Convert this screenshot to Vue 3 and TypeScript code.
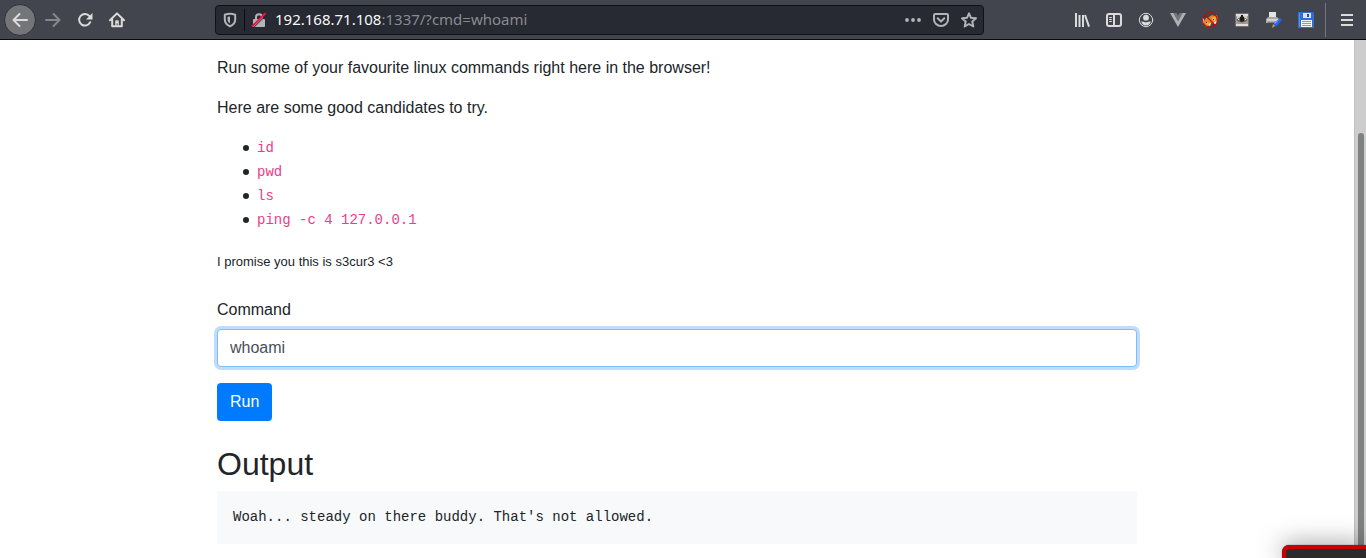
<script setup lang="ts">
import { ref } from 'vue'

const command = ref('whoami')
const candidates: string[] = ['id', 'pwd', 'ls', 'ping -c 4 127.0.0.1']
const output = "Woah... steady on there buddy. That's not allowed."
</script>

<template>
  <div class="window">
    <header class="toolbar">
      <nav class="nav" aria-label="Navigation">
        <button class="tool back" type="button" aria-label="Back">
          <svg width="16" height="16" viewBox="0 0 16 16"><path d="M15 8H2M7.500 2L1.500 8l6 6" /></svg>
        </button>
        <button class="tool dim" type="button" aria-label="Forward">
          <svg width="16" height="16" viewBox="0 0 16 16"><path d="M1 8h13M8.500 2l6 6-6 6" /></svg>
        </button>
        <button class="tool" type="button" aria-label="Reload">
          <svg width="16" height="16" viewBox="0 0 16 16"><path d="M13.200 10.200A5.800 5.800 0 1 1 12.500 4.200" /><path class="solid" d="M15.500 1v6.500H9z" /></svg>
        </button>
        <button class="tool" type="button" aria-label="Home">
          <svg width="16" height="16" viewBox="0 0 16 16"><path d="M1 8.200L8 1.400l7 6.800M3.200 7.500v6.800h9.600V7.500" /><path class="solid" d="M6.200 14V9.200q0-1 1-1h1.600q1 0 1 1V14H8.600v-2.500H7.600V14z" /></svg>
        </button>
      </nav>

      <div class="urlbar">
        <button class="mini" type="button" aria-label="Tracking protection">
          <svg width="16" height="16" viewBox="0 0 16 16"><path d="M8 1.800c1.800 0 3.500.4 5.200 1v4.700c0 3-2 5.500-5.200 6.900-3.200-1.400-5.200-3.900-5.200-6.900V2.800c1.700-.6 3.400-1 5.200-1z" /><path class="solid" d="M8 4.500c-1 0-1.700.1-2.500.4v2.600c0 1.700.9 3 2.500 4z" /></svg>
        </button>
        <span class="split"></span>
        <button class="mini" type="button" aria-label="Connection not secure">
          <svg width="16" height="16" viewBox="0 0 16 16"><path d="M5 7V5.200a3 3 0 0 1 6 0V7" /><path class="solid" d="M3 7h10q1 0 1 1v6q0 1-1 1H3q-1 0-1-1V8q0-1 1-1z" /><path class="gap" d="M3 15.200L15.500 3" /><path class="strike" d="M1.500 14L14 1.800" /></svg>
        </button>
        <a class="address" href="#"><b>192.168.71.108</b>:1337/?cmd=whoami</a>
        <div class="actions">
          <button class="mini" type="button" aria-label="Page actions">
            <svg width="16" height="16" viewBox="0 0 16 16"><g class="solid"><circle cx="2" cy="8" r="1.900" /><circle cx="8" cy="8" r="1.900" /><circle cx="14" cy="8" r="1.900" /></g></svg>
          </button>
          <button class="mini" type="button" aria-label="Save to Pocket">
            <svg width="16" height="16" viewBox="0 0 16 16"><path d="M2.300 2h11.400q1.300 0 1.300 1.300V7.500a7 6.500 0 0 1-14 0V3.300Q1 2 2.300 2z" /><path d="M4.700 6.300L8 9.400l3.300-3.100" /></svg>
          </button>
          <button class="mini" type="button" aria-label="Bookmark">
            <svg width="16" height="16" viewBox="0 0 16 16"><path d="M8 1.300l2 4.500 5 .5-3.700 3.300 1 4.900L8 12l-4.300 2.500 1-4.900L1 6.300l5-.5z" /></svg>
          </button>
        </div>
      </div>

      <div class="extensions">
        <button class="tool" type="button" aria-label="Library">
          <svg class="books" width="16" height="16" viewBox="0 0 16 16"><path d="M2 1v14M5.500 3v12M9 3v12M11 3l4 11.600" /></svg>
        </button>
        <button class="tool" type="button" aria-label="Sidebars">
          <svg width="16" height="16" viewBox="0 0 16 16"><rect x="1" y="2" width="14" height="12" rx="2" /><path d="M8 2v12" /><path class="fine" d="M3.500 5.500h2M3.500 7.500h2M3.500 9.500h2" /></svg>
        </button>
        <button class="tool" type="button" aria-label="Account">
          <svg width="16" height="16" viewBox="0 0 16 16"><circle class="fine" cx="8" cy="8" r="6.700" /><circle class="solid" cx="8" cy="5.700" r="2.900" /><path class="solid" d="M3.200 9.400q1.800 0 2.600.4 2.200 1 4.400 0 .8-.4 2.600-.4-.8 3.900-4.800 4-4-.1-4.800-4z" /></svg>
        </button>
        <button class="tool" type="button" aria-label="Vue devtools">
          <svg class="art" width="16" height="16" viewBox="0 0 16 16"><path fill="#b0b1b2" d="M0 1h3.500L8 9l4.500-8H16L8 15z" /><path fill="#74777b" d="M3.500 1h3L8 3.700 9.500 1h3L8 9z" /></svg>
        </button>
        <button class="tool" type="button" aria-label="Proxy switcher">
          <svg class="art" width="16" height="16" viewBox="0 0 16 16"><path fill="#e8842a" d="M2 9l2-3 3-1 3-2 2 1 3-1 1 4-1 4-3 1-3-1-1 3-4 1-2-3z" /><path fill="#f8b45a" d="M11 5l3 1-1 3-3-1zM4 10l3 1-2 2z" /><path fill="#f2e6d8" d="M0 6l2 1v4l-1 1zM12 10l3-1-1 3-2 1zM6 12l3-1-1 3z" /><path fill="#5b3217" d="M11 7h1v1h-1zM4 10h1v1H4z" /><circle cx="8" cy="8" r="7.400" fill="none" stroke="#c00d0d" stroke-width="1.100" /><path d="M3 3l10 10" stroke="#b01010" stroke-width="1.100" /></svg>
        </button>
        <button class="tool" type="button" aria-label="Privacy extension">
          <svg class="art" width="16" height="16" viewBox="0 0 16 16"><rect x="1.500" y="1.500" width="13" height="13" fill="#a59c94" /><path fill="#e0dcd7" d="M2 2h12v2H2zM2 12h12v2H2z" /><path fill="#d4cfc9" d="M3 4h3v3H3zM10 4h3v3h-3z" /><path fill="#6f6964" d="M2 8q6-6 12 0-6 5-12 0z" /><path fill="#181a1c" d="M7 3h2v2h1v4l-2 1-2-1V5h1z" /><path fill="#f0eeeb" d="M4 7h1v1H4zM11 7h1v1h-1z" /></svg>
        </button>
        <button class="tool" type="button" aria-label="Print and edit">
          <svg class="art" width="16" height="16" viewBox="0 0 16 16"><path fill="#e4e4e4" d="M3 0h7v6H3z" /><path fill="#a9a9a9" d="M2 5h9l2 2v4H0V7z" /><path fill="#d2d2d2" d="M1 7h11v2H1z" /><path fill="#858585" d="M2 10h9v1H2z" /><path fill="#2463e7" d="M14 6l2 2-5 6-4 1 1-4z" /><path fill="#79a6ff" d="M14 7l-5 5-1-1z" /><path fill="#d2a226" d="M7 12l2 2-3 2z" /></svg>
        </button>
        <button class="tool" type="button" aria-label="Save page">
          <svg class="art" width="16" height="16" viewBox="0 0 16 16"><path fill="#2f6fd0" d="M0 0h15l1 1v15H0z" /><path fill="#5a93e6" d="M1 1h1v14H1z" /><path fill="#dce6f2" d="M5 1h8v5H5z" /><path fill="#234f9b" d="M9 2h2v3H9z" /><path fill="#f6f6f6" d="M3 8h11v7H3z" /><path d="M4 9.500h9M4 11.500h9M4 13.500h9" stroke="#999" stroke-width="1" stroke-linecap="butt" /></svg>
        </button>
      </div>
      <span class="divider"></span>
      <button class="tool menu" type="button" aria-label="Menu">
        <svg width="16" height="16" viewBox="0 0 16 16"><path d="M2 3h12M2 8h12M2 13h12" /></svg>
      </button>
    </header>

    <div class="viewport">
      <main class="page">
        <div class="container">
          <p>Run some of your favourite linux commands right here in the browser!</p>
          <p>Here are some good candidates to try.</p>
          <ul>
            <li v-for="item in candidates" :key="item"><code>{{ item }}</code></li>
          </ul>
          <p class="note">I promise you this is s3cur3 &lt;3</p>
          <form @submit.prevent>
            <label for="command">Command</label>
            <input id="command" v-model="command" type="text" autocomplete="off" spellcheck="false" />
            <button class="run" type="submit">Run</button>
          </form>
          <h2>Output</h2>
          <pre>{{ output }}</pre>
        </div>
      </main>
      <div class="scrollbar" aria-hidden="true"><span class="thumb"></span></div>
    </div>
    <aside class="toast" aria-hidden="true"></aside>
  </div>
</template>

<style>
body {
  margin: 0;
  overflow: hidden;
}
</style>

<style scoped>
* {
  box-sizing: border-box;
}
.window {
  display: flex;
  flex-direction: column;
  height: 100vh;
  background: #fff;
  color: #212529;
  font: 16px/24px "Liberation Sans", Arial, sans-serif;
}
.toolbar {
  display: flex;
  flex: none;
  align-items: center;
  height: 40px;
  padding: 0 3px 0 4px;
  background: #42454d;
  border-bottom: 1px solid #0c0c0d;
}
.nav,
.extensions,
.actions {
  display: flex;
  align-items: center;
}
.tool,
.mini {
  display: grid;
  place-items: center;
  flex: none;
  width: 32px;
  height: 32px;
  padding: 0;
  border: 0;
  border-radius: 4px;
  background: none;
  color: #dbdbda;
}
.back {
  margin-right: 1px;
  border: 1px solid #303238;
  border-radius: 50%;
  background: #737578;
}
.dim {
  color: #85878b;
}
.mini {
  width: 28px;
  height: 28px;
  color: #b3b4b8;
}
svg {
  display: block;
  fill: none;
  stroke: currentColor;
  stroke-width: 2;
  stroke-linecap: round;
  stroke-linejoin: round;
}
.solid {
  fill: currentColor;
  stroke: none;
}
.fine {
  stroke-width: 1;
}
.art {
  stroke: none;
}
.books,
.menu svg {
  stroke-linecap: butt;
}
.gap {
  stroke: #272933;
  stroke-width: 1;
}
.strike {
  stroke: #f5103f;
}
.urlbar {
  display: flex;
  flex: 1;
  align-items: center;
  min-width: 0;
  height: 30px;
  margin: 0 82px;
  border: 1px solid #101116;
  border-radius: 4px;
  background: #272933;
}
.split {
  width: 1px;
  height: 22px;
  background: #0c0d10;
}
.address {
  flex: 1;
  margin-left: 2px;
  padding-bottom: 2px;
  overflow: hidden;
  color: #8a8b90;
  font: 15px/24px "Noto Sans", sans-serif;
  text-decoration: none;
  white-space: nowrap;
}
.address b {
  color: #f9f9fa;
  font-weight: 400;
}
.divider {
  width: 1px;
  height: 34px;
  margin: 0 5px 0 3px;
  background: #74767b;
}
.viewport {
  display: flex;
  flex: 1;
  min-height: 0;
}
.page {
  flex: 1;
  min-width: 0;
  padding: 16px 16px 0;
  overflow: hidden;
}
.container {
  max-width: 920px;
  margin: 0 auto;
}
p {
  margin: 0 0 16px;
}
ul {
  margin: 0 0 18px;
  padding-left: 26px;
  list-style: none;
}
li {
  display: flex;
  align-items: center;
  gap: 8px;
}
li::before {
  width: 6px;
  height: 6px;
  border-radius: 50%;
  background: #212529;
  content: "";
}
code,
pre {
  font-family: "Liberation Mono", "Courier New", monospace;
  font-size: 14px;
}
code {
  color: #e83e8c;
}
.note {
  margin-bottom: 24px;
  font-size: 13px;
}
form {
  display: flex;
  flex-direction: column;
  align-items: flex-start;
}
label {
  margin-bottom: 7px;
}
input {
  width: 100%;
  height: 38px;
  padding: 6px 12px;
  border: 1px solid #80bdff;
  border-radius: 4px;
  outline: 0;
  background: #fff;
  box-shadow: 0 0 0 3px #bfdeff;
  color: #495057;
  font: inherit;
}
.run {
  height: 38px;
  margin-top: 16px;
  padding: 6px 13px;
  border: 0;
  border-radius: 4px;
  background: #007bff;
  color: #fff;
  font: inherit;
}
h2 {
  margin: 24px 0 8px;
  font-size: 32px;
  font-weight: 400;
  line-height: 38px;
}
pre {
  margin: 0;
  padding: 16px;
  overflow: auto;
  background: #f8f9fa;
  line-height: 21px;
}
.scrollbar {
  display: flex;
  justify-content: center;
  flex: none;
  width: 12px;
  padding-top: 93px;
  border-left: 1px solid #c4bfb7;
  background: #cdcdcd;
}
.thumb {
  width: 6px;
  border-radius: 3px 3px 0 0;
  background: #7e8282;
}
.toast {
  position: fixed;
  right: 0;
  bottom: 0;
  width: 84px;
  height: 13px;
  border: solid #c80000;
  border-width: 4px 0 0 4px;
  border-radius: 7px 0 0 0;
  background: #2b2b2b;
  box-shadow: 0 0 1px #000, 0 0 24px rgba(0, 0, 0, 0.5);
}
</style>
